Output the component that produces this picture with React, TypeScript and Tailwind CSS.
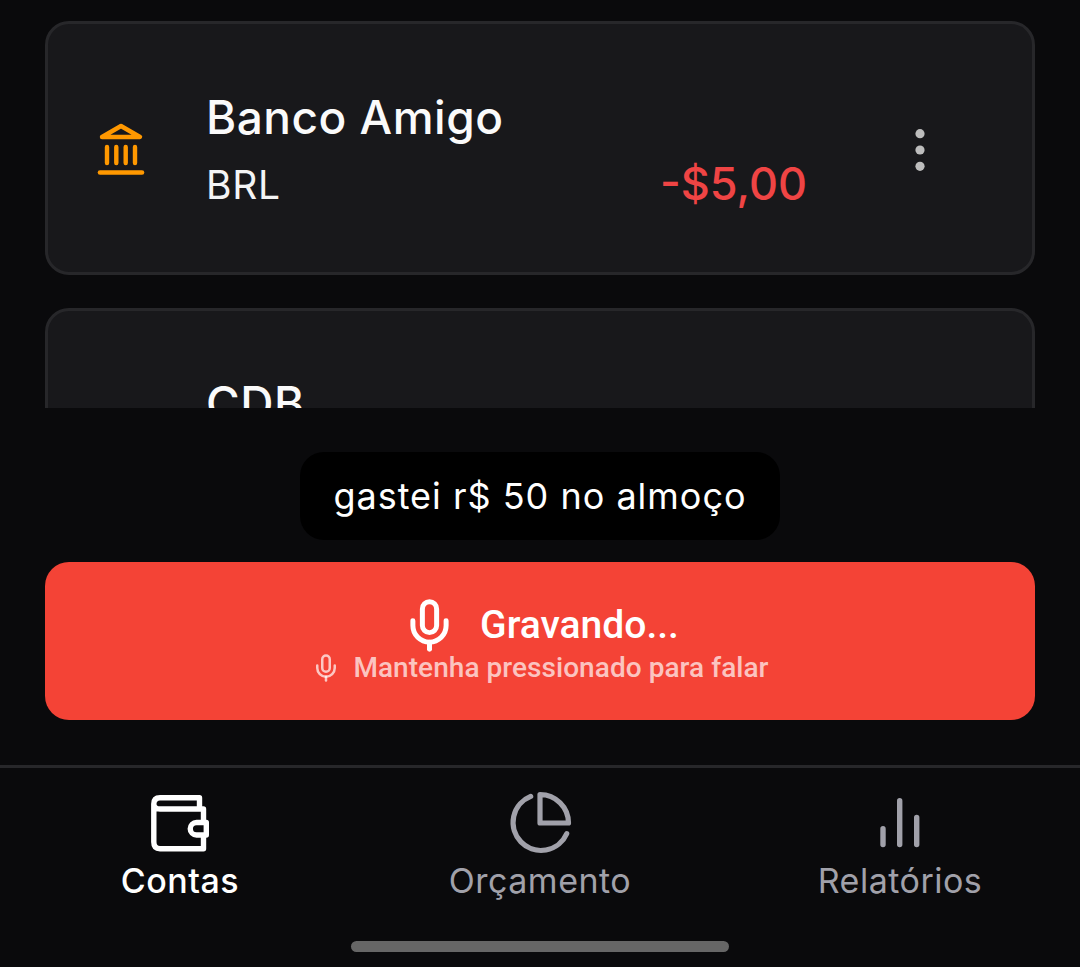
import { Mic } from 'lucide-react'

const INTER = { fontFamily: 'Inter, sans-serif' }

function BankIcon() {
  return (
    <svg className="mt-[2px] shrink-0" width="48" height="52" viewBox="0 0 48 52" fill="none" stroke="#ff9800" strokeLinecap="round" strokeLinejoin="round">
      <path d="M5 14 L24 3 L43 14 Z" strokeWidth="4.4" />
      <path d="M10 24 V40 M19.3 24 V40 M28.7 24 V40 M38 24 V40" strokeWidth="4.4" />
      <path d="M3 49.5 H45" strokeWidth="4.6" />
    </svg>
  )
}

function WalletIcon() {
  return (
    <svg width="58" height="57" viewBox="0 0 58 57" fill="none" stroke="#fff" strokeWidth="5.4" strokeLinecap="round" strokeLinejoin="round">
      <path d="M48.5 14 V2.7 H9 Q2.8 2.7 2.8 9 V47 Q2.8 53.7 9 53.7 H52.5 V41 M52.5 27 V14 H9 Q2.8 14 2.8 9" />
      <path d="M55.3 27.5 H45.5 a6.2 6.2 0 0 0 0 12.5 H55.3 Z" />
    </svg>
  )
}

function PieIcon() {
  return (
    <svg width="64" height="64" viewBox="0 0 64 64" fill="none" stroke="#a1a1aa" strokeWidth="5.2" strokeLinecap="round" strokeLinejoin="round">
      <path d="M22.7 5.4 A28 28 0 1 0 58.7 42.7" />
      <path d="M32 3.5 A28.5 28.5 0 0 1 60.5 32 H32 Z" />
    </svg>
  )
}

function BarsIcon() {
  return (
    <svg width="46" height="60" viewBox="0 0 46 60" fill="none" stroke="#a1a1aa" strokeWidth="5.4" strokeLinecap="round">
      <path d="M6 35.7 V51.6 M22.7 7.7 V51.6 M39.7 24.4 V51.6" />
    </svg>
  )
}

function DotsIcon() {
  return (
    <svg className="mt-[4px] shrink-0" width="10" height="42" viewBox="0 0 10 42" fill="#bdbdbd">
      <circle cx="5" cy="4.7" r="4.6" />
      <circle cx="5" cy="21" r="4.6" />
      <circle cx="5" cy="37.3" r="4.6" />
    </svg>
  )
}

const TABS = [
  { label: 'Contas', icon: <WalletIcon />, active: true },
  { label: 'Orçamento', icon: <PieIcon />, active: false },
  { label: 'Relatórios', icon: <BarsIcon />, active: false },
]

export default function App() {
  return (
    <div className="w-[1080px] h-[967px] bg-[#0a0a0c] flex flex-col overflow-hidden" style={INTER}>
      {/* Account list */}
      <div className="h-[408px] overflow-hidden px-[45px] pt-[21px] flex flex-col gap-[33px] shrink-0">
        <div className="h-[254px] shrink-0 rounded-[24px] bg-[#18181b] border-[3px] border-[#27272a] flex items-center pl-[49px] pr-[107px]">
          <BankIcon />
          <div className="ml-[61px] flex-1 mt-[2px]">
            <p className="text-[46px] leading-[52px] font-medium text-[#fafafa] tracking-[0.5px]">Banco Amigo</p>
            <p className="text-[39px] leading-[44px] mt-[20px] text-[#f4f4f5] tracking-[0.7px]">BRL</p>
          </div>
          <span className="text-[45px] leading-[52px] font-medium text-[#ef4444] mt-[72px] mr-[108px]">-$5,00</span>
          <DotsIcon />
        </div>
        <div className="h-[254px] shrink-0 rounded-[24px] bg-[#18181b] border-[3px] border-[#27272a] flex items-start pl-[158px] pt-[66px]">
          <p className="text-[46px] leading-[52px] font-medium text-[#fafafa] tracking-[0.5px]">CDB</p>
        </div>
      </div>

      {/* Voice input */}
      <div className="flex-1 px-[45px] pt-[44px] flex flex-col items-center">
        <div className="w-[480px] h-[88px] rounded-[24px] bg-black flex items-center justify-center text-[36px] text-white tracking-[1px]">
          gastei r$ 50 no almoço
        </div>
        <button className="mt-[22px] w-full h-[158px] rounded-[24px] bg-[#f44336] flex flex-col items-center pt-[36px] text-white" style={{ fontFamily: 'Roboto, sans-serif' }}>
          <span className="flex items-center gap-[22px] h-[54px]">
            <Mic size={57} strokeWidth={2.1} />
            <span className="text-[39px] leading-[44px] font-medium">Gravando...</span>
          </span>
          <span className="flex items-center gap-[12px] text-white/70 text-[28px] leading-[32px] font-medium tracking-[0.05px]">
            <Mic size={30} strokeWidth={2} />
            Mantenha pressionado para falar
          </span>
        </button>
      </div>

      {/* Bottom navigation */}
      <div className="shrink-0 border-t-[3px] border-[#27272a] h-[202px]">
        <div className="grid grid-cols-3 pt-[23px]">
          {TABS.map((t) => (
            <div key={t.label} className="flex flex-col items-center">
              <div className="h-[64px] flex items-center justify-center">{t.icon}</div>
              <span className={`text-[34px] leading-[44px] mt-[4px] tracking-[0.5px] ${t.active ? 'text-white font-medium' : 'text-[#a1a1aa]'}`}>{t.label}</span>
            </div>
          ))}
        </div>
        <div className="mx-auto mt-[38px] w-[378px] h-[11px] rounded-full bg-[#666666]" />
      </div>
    </div>
  )
}
